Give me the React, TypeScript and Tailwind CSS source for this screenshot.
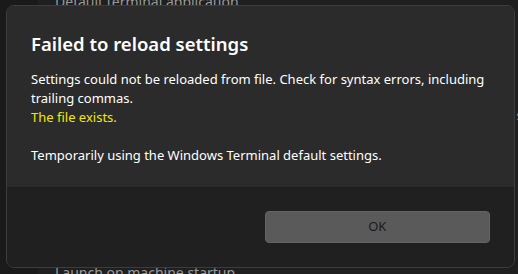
export default function App() {
  return (
    <div className="relative w-[518px] h-[274px] overflow-hidden bg-[#1c1c1c] font-['Noto_Sans',sans-serif]">
      {/* settings page behind the dialog */}
      <div className="flex h-full">
        <div className="w-[38px] shrink-0 bg-[#1a1a1a]" />
        <div className="flex-1 flex flex-col bg-[#1f1f1f] pl-[17px]">
          <div className="-mt-[8px] text-[14px] leading-[19px] text-[#9a9a9a]">Default terminal application</div>
          <div className="mt-[58px] h-px bg-[#2e2e2e]" />
          <div className="mt-[40px] h-px bg-[#2e2e2e]" />
          <div className="ml-auto mr-[-4px] text-[12px] leading-[14px] text-[#7a7a7a]">s</div>
          <div className="mt-[122px] h-px bg-[#2e2e2e]" />
          <div className="mt-[18px] text-[14px] leading-[19px] text-[#9a9a9a]">Launch on machine startup</div>
        </div>
      </div>

      {/* dialog */}
      <div className="absolute left-[6px] top-[5px] w-[509px] h-[263px] flex flex-col rounded-[8px] border border-[#3d3d3d] overflow-hidden">
        <div className="bg-[#2b2b2b] px-[24px] pt-[24px] h-[182px] border-b border-[#1d1d1d]">
          <h1 className="text-[18.5px] leading-[28px] font-semibold text-white">Failed to reload settings</h1>
          <div className="mt-[12px] text-[13px] leading-[19px] text-white">
            <p>Settings could not be reloaded from file. Check for syntax errors, including trailing commas.</p>
            <p className="text-[#f4e800]">The file exists.</p>
            <p className="h-[19px]" />
            <p>Temporarily using the Windows Terminal default settings.</p>
          </div>
        </div>
        <div className="flex-1 bg-[#202020] px-[24px] pt-[23px] grid grid-cols-2 gap-2 content-start">
          <div />
          <button className="h-[32px] rounded-[4px] bg-[#5a5a5a] border border-[#636363] text-[13px] text-[#1b1b1b]">
            OK
          </button>
        </div>
      </div>
    </div>
  );
}
